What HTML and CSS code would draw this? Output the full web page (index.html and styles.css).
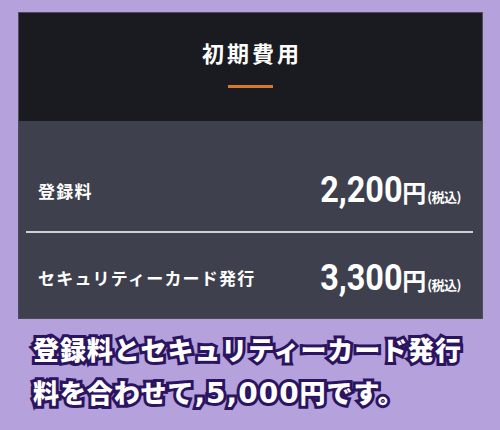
FILE: index.html
```html
<!DOCTYPE html>
<html lang="ja">
<head>
<meta charset="utf-8">
<link rel="stylesheet" href="styles.css">
</head>
<body>
<div class="page">
  <section class="card">
    <header class="card-head">
      <h1 class="title">初期費用</h1>
      <span class="accent"></span>
    </header>
    <div class="card-body">
      <div class="row row-first">
        <span class="label">登録料</span>
        <span class="price"><span class="num">2,200</span><span class="yen">円</span><span class="tax">(税込)</span></span>
      </div>
      <hr class="divider">
      <div class="row row-second">
        <span class="label">セキュリティーカード発行</span>
        <span class="price"><span class="num">3,300</span><span class="yen">円</span><span class="tax">(税込)</span></span>
      </div>
    </div>
  </section>
  <p class="caption">登録料とセキュリティーカード発行<br>料を合わせて<span class="latin">,5,000</span>円です。</p>
</div>
</body>
</html>
```
FILE: styles.css
```css
* { box-sizing: border-box; }
html, body {
  margin: 0;
  padding: 0;
  width: 500px;
  height: 430px;
  background: #b5a1dc;
  overflow: hidden;
  font-family: "Noto Sans CJK JP", "Noto Sans", sans-serif;
}
.page {
  padding: 12px 17px 0 18px;
}
.card {
  width: 465px;
  border: 1px solid #4d4d5a;
  background: #3e414d;
}
.card-head {
  background: #1a1b20;
  height: 108px;
  display: flex;
  flex-direction: column;
  align-items: center;
  padding-top: 24px;
}
.title {
  margin: 0;
  color: #fff;
  font-size: 22px;
  line-height: 30px;
  font-weight: 700;
  letter-spacing: 3px;
  padding-left: 3px;
}
.accent {
  display: block;
  width: 45px;
  height: 3px;
  margin-top: 18px;
  background: #d57a2c;
}
.row {
  display: flex;
  align-items: center;
  justify-content: space-between;
  padding: 0 21px 0 19px;
}
.row-first { padding-top: 28px; height: 110px; }
.row-second { padding-top: 4px; height: 85px; }
.label {
  color: #fff;
  font-size: 17px;
  font-weight: 700;
  letter-spacing: 1.2px;
}
.price {
  display: flex;
  align-items: baseline;
  color: #fff;
}
.num {
  display: inline-block;
  font-family: Roboto, "Liberation Sans", sans-serif;
  font-weight: 700;
  font-size: 36px;
  line-height: 40px;
  transform: scaleX(0.9);
  transform-origin: right center;
}
.yen {
  font-size: 24px;
  font-weight: 700;
}
.tax {
  font-size: 13px;
  font-weight: 700;
  letter-spacing: -0.5px;
  margin-left: 1px;
}
.divider {
  margin: 0 9px 0 7px;
  border: 0;
  height: 2px;
  background: #cfd0d6;
}
.caption {
  margin: 8px 0 0 15px;
  color: #fff;
  font-size: 26px;
  font-weight: 900;
  line-height: 43px;
  letter-spacing: 0.9px;
  -webkit-text-stroke: 6px #2b1460;
  paint-order: stroke fill;
}
.latin {
  font-family: "DejaVu Sans", "Noto Sans CJK JP", sans-serif;
  font-weight: 700;
  font-size: 28px;
  letter-spacing: 1px;
}
```
